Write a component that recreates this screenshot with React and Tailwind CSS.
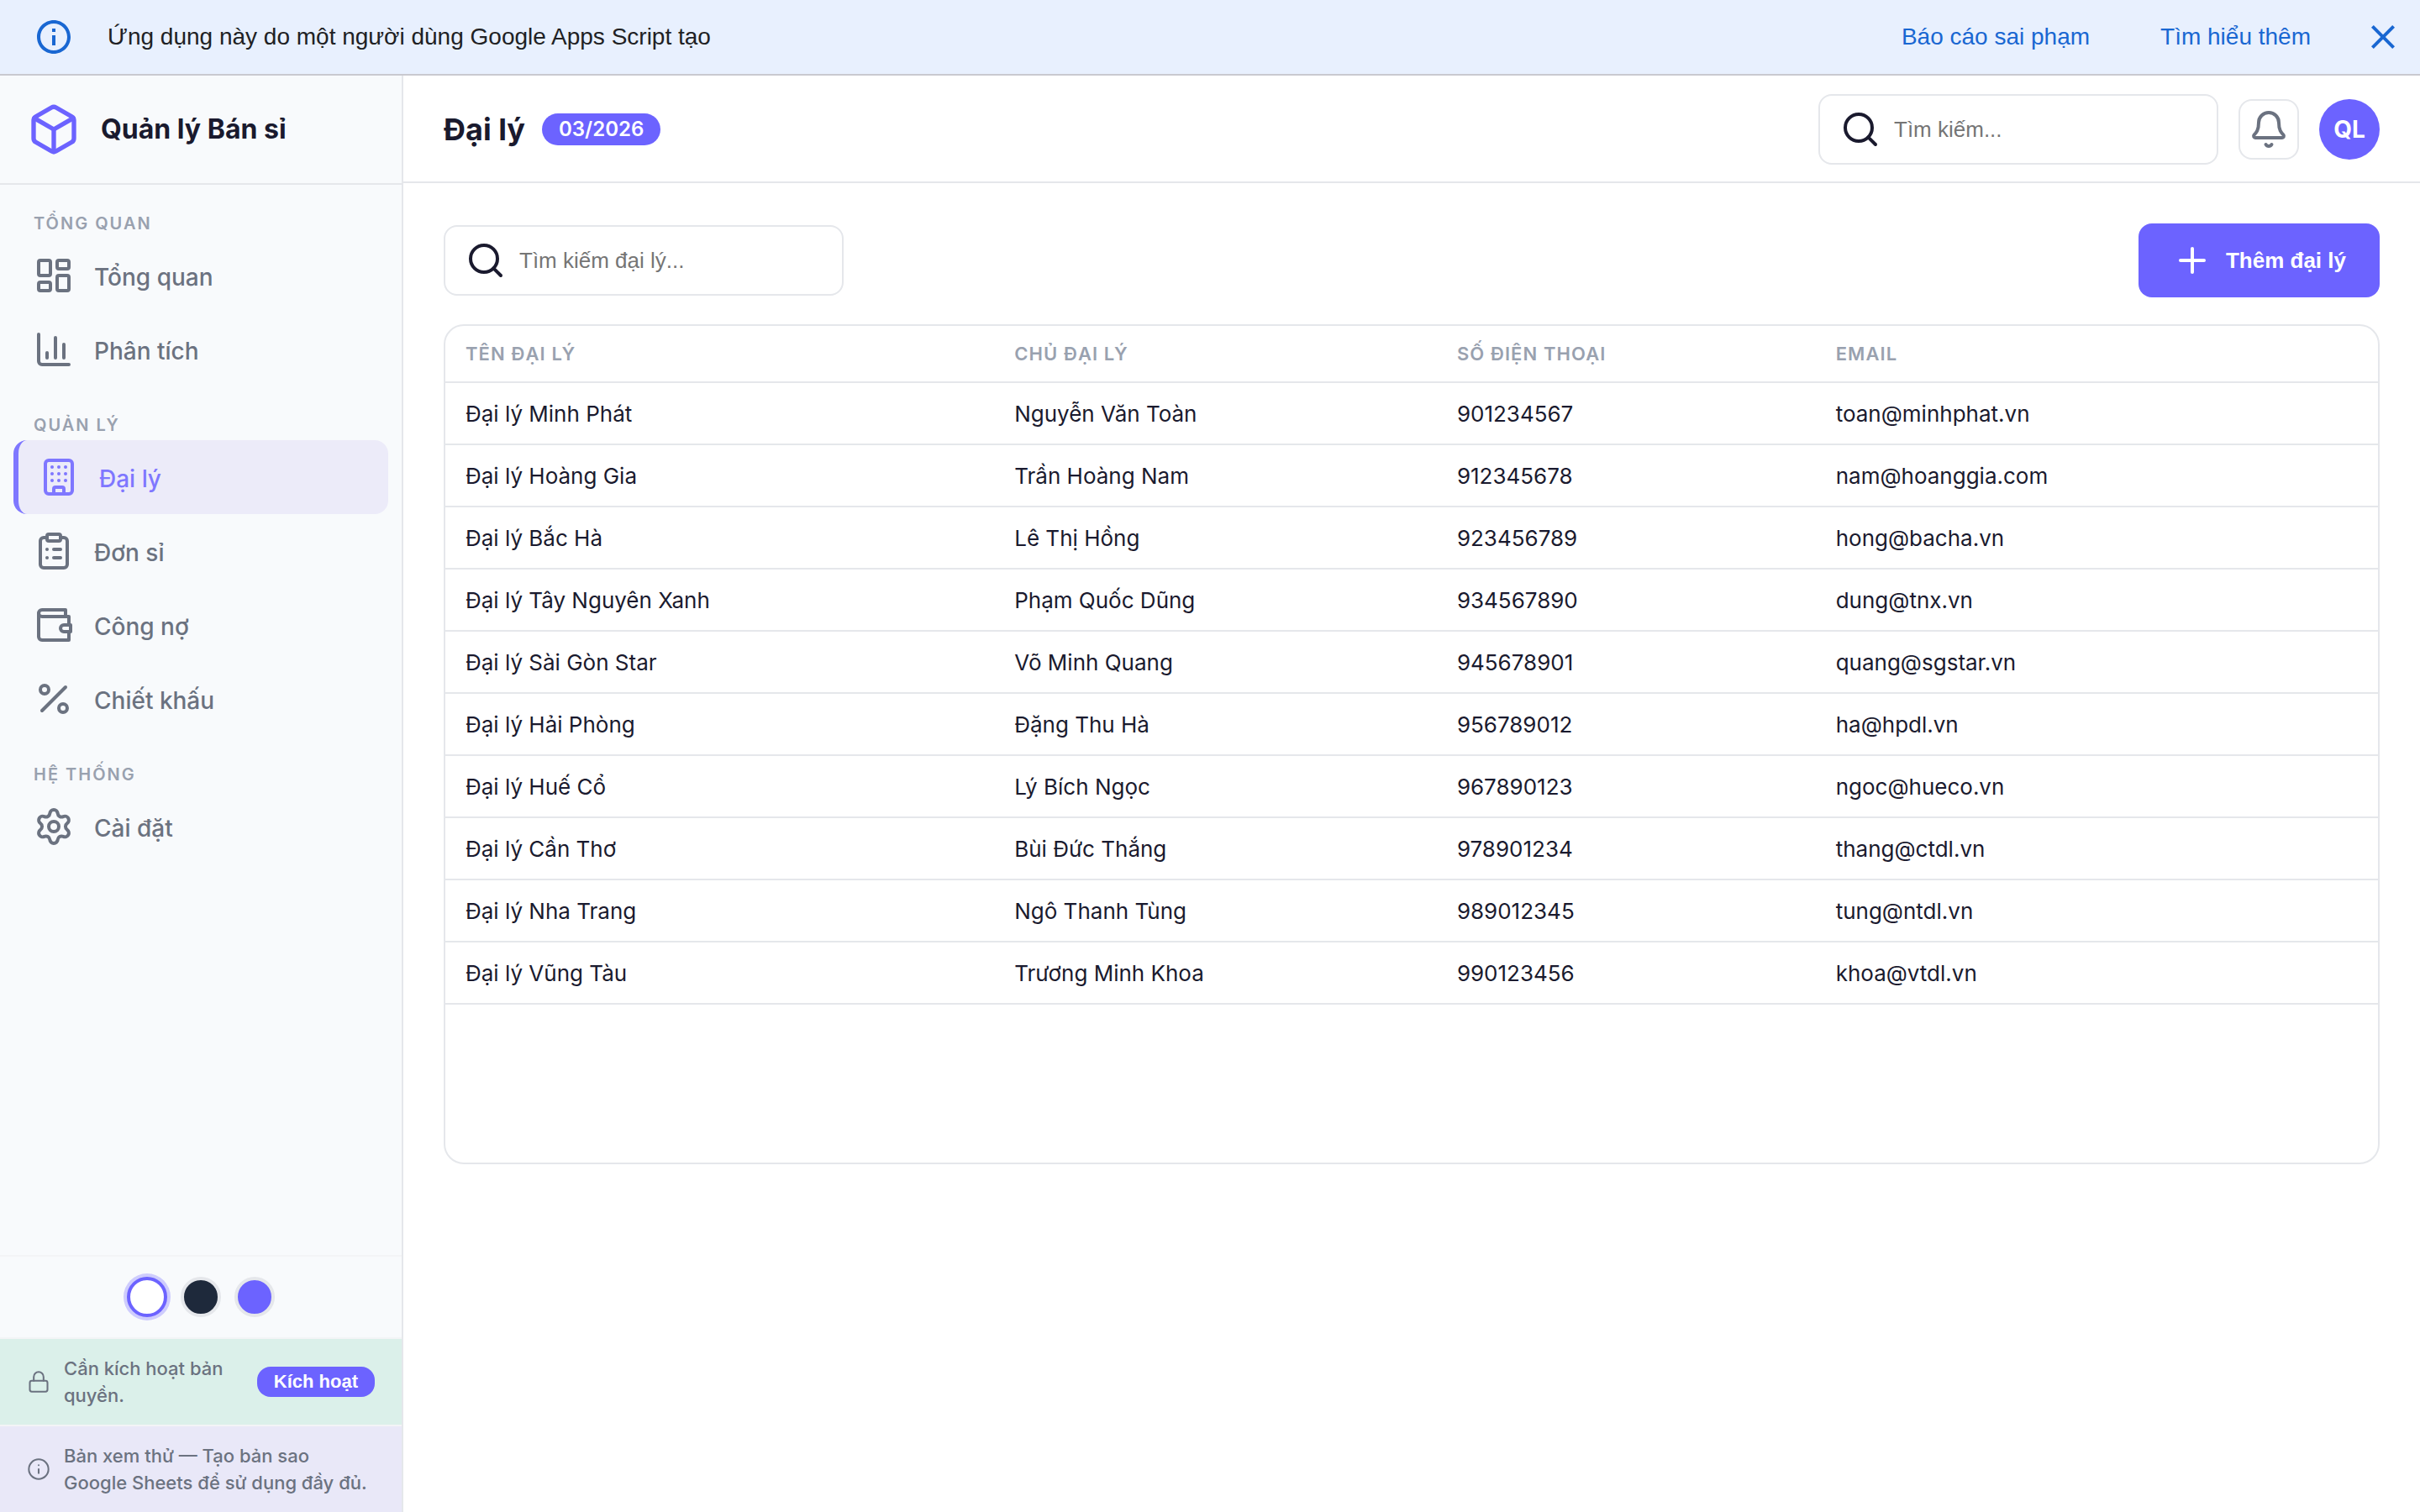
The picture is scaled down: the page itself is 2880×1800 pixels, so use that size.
import React, { useState } from "react";
import {
  Bell,
  Box,
  Building,
  ChartColumn,
  ClipboardList,
  Info,
  LayoutDashboard,
  Lock,
  Percent,
  Plus,
  Search,
  Settings,
} from "lucide-react";

const WalletIcon = ({ className = "size-12" }) => (
  <svg
    viewBox="0 0 24 24"
    className={className}
    fill="none"
    stroke="currentColor"
    strokeWidth="2"
    strokeLinecap="round"
    strokeLinejoin="round"
    aria-hidden
  >
    <path d="M21 12V7H5a2 2 0 0 1 0-4h14v4" />
    <path d="M3 5v14a2 2 0 0 0 2 2h16v-5" />
    <path d="M18 12a2 2 0 0 0 0 4h4v-4Z" />
  </svg>
);

const NoticeIcon = ({ className = "size-12" }) => (
  <svg viewBox="0 0 24 24" className={className} fill="currentColor" aria-hidden>
    <path d="M11 7h2v2h-2zm0 4h2v6h-2zm1-9C6.48 2 2 6.48 2 12s4.48 10 10 10 10-4.48 10-10S17.52 2 12 2zm0 18c-4.41 0-8-3.59-8-8s3.59-8 8-8 8 3.59 8 8-3.59 8-8 8z" />
  </svg>
);

const CloseIcon = ({ className = "size-12" }) => (
  <svg viewBox="0 0 24 24" className={className} fill="currentColor" aria-hidden>
    <path d="M19 6.41L17.59 5 12 10.59 6.41 5 5 6.41 10.59 12 5 17.59 6.41 19 12 13.41 17.59 19 19 17.59 13.41 12z" />
  </svg>
);

const NAV = [
  {
    title: "Tổng quan",
    items: [
      { id: "overview", label: "Tổng quan", icon: LayoutDashboard },
      { id: "analytics", label: "Phân tích", icon: ChartColumn },
    ],
  },
  {
    title: "Quản lý",
    items: [
      { id: "agents", label: "Đại lý", icon: Building },
      { id: "orders", label: "Đơn sỉ", icon: ClipboardList },
      { id: "debts", label: "Công nợ", icon: WalletIcon },
      { id: "discounts", label: "Chiết khấu", icon: Percent },
    ],
  },
  {
    title: "Hệ thống",
    items: [{ id: "settings", label: "Cài đặt", icon: Settings }],
  },
];

const THEMES = [
  { id: "light", label: "Sáng", color: "bg-white" },
  { id: "dark", label: "Tối", color: "bg-[#1e293b]" },
  { id: "purple", label: "Tím", color: "bg-[#6c63ff]" },
];

const AGENTS = [
  { name: "Đại lý Minh Phát", owner: "Nguyễn Văn Toàn", phone: "901234567", email: "toan@minhphat.vn" },
  { name: "Đại lý Hoàng Gia", owner: "Trần Hoàng Nam", phone: "912345678", email: "nam@hoanggia.com" },
  { name: "Đại lý Bắc Hà", owner: "Lê Thị Hồng", phone: "923456789", email: "hong@bacha.vn" },
  { name: "Đại lý Tây Nguyên Xanh", owner: "Phạm Quốc Dũng", phone: "934567890", email: "dung@tnx.vn" },
  { name: "Đại lý Sài Gòn Star", owner: "Võ Minh Quang", phone: "945678901", email: "quang@sgstar.vn" },
  { name: "Đại lý Hải Phòng", owner: "Đặng Thu Hà", phone: "956789012", email: "ha@hpdl.vn" },
  { name: "Đại lý Huế Cổ", owner: "Lý Bích Ngọc", phone: "967890123", email: "ngoc@hueco.vn" },
  { name: "Đại lý Cần Thơ", owner: "Bùi Đức Thắng", phone: "978901234", email: "thang@ctdl.vn" },
  { name: "Đại lý Nha Trang", owner: "Ngô Thanh Tùng", phone: "989012345", email: "tung@ntdl.vn" },
  { name: "Đại lý Vũng Tàu", owner: "Trương Minh Khoa", phone: "990123456", email: "khoa@vtdl.vn" },
];

function NoticeBar() {
  return (
    <div className="flex h-[90px] shrink-0 items-center border-b-2 border-[#c9c9d0] bg-[#e8f0fe] pl-10 pr-5 font-['Liberation_Sans',sans-serif] text-[28px] text-[#202124]">
      <NoticeIcon className="size-12 text-[#1967d2]" />
      <span className="ml-10 flex-1">Ứng dụng này do một người dùng Google Apps Script tạo</span>
      <a href="#report" className="text-[#1967d2]">Báo cáo sai phạm</a>
      <a href="#more" className="ml-[84px] text-[#1967d2]">Tìm hiểu thêm</a>
      <button aria-label="Đóng" className="ml-[62px] text-[#1967d2]">
        <CloseIcon className="size-12" />
      </button>
    </div>
  );
}

function NavItem({ item, active, onSelect }) {
  const Icon = item.icon;
  return (
    <button
      onClick={() => onSelect(item.id)}
      className={
        "flex h-[88px] w-full items-center gap-6 rounded-2xl px-6 text-[28px] font-medium " +
        (active ? "border-l-6 border-[#7f77ff] bg-[#ecebf9] text-[#7f77ff]" : "text-[#6b7280]")
      }
    >
      <Icon className="size-12" />
      <span className="pt-1">{item.label}</span>
    </button>
  );
}

function Sidebar() {
  const [page, setPage] = useState("agents");
  const [theme, setTheme] = useState("light");

  return (
    <aside className="flex w-[480px] shrink-0 flex-col border-r-2 border-gray-200 bg-[#f8fafc]">
      <div className="flex h-[130px] items-center gap-6 border-b-2 border-gray-200 px-8">
        <Box className="size-16 text-[#6c63ff]" />
        <span className="text-[32px] font-bold">Quản lý Bán sỉ</span>
      </div>

      <nav className="flex-1 px-4">
        {NAV.map((group) => (
          <div key={group.title}>
            <div className="px-6 pt-[34px] pb-1.5 text-[20px] leading-6 font-semibold tracking-widest text-gray-400 uppercase">
              {group.title}
            </div>
            {group.items.map((item) => (
              <NavItem key={item.id} item={item} active={page === item.id} onSelect={setPage} />
            ))}
          </div>
        ))}
      </nav>

      <div className="flex justify-center gap-4 border-t-2 border-gray-100 py-6">
        {THEMES.map((t) => (
          <button
            key={t.id}
            aria-label={t.label}
            onClick={() => setTheme(t.id)}
            className={
              "size-12 rounded-full border-4 " + t.color + " " +
              (theme === t.id ? "border-[#6c63ff] ring-4 ring-[#6c63ff]/30" : "border-gray-200")
            }
          />
        ))}
      </div>

      <div className="flex items-center gap-4 border-t-2 border-gray-100 bg-[#dbf0ea] px-8 py-[19px] text-[22px] leading-8 font-medium text-[#6b7280]">
        <Lock className="size-7 shrink-0" strokeWidth={1.75} />
        <span className="flex-1">Cần kích hoạt bản quyền.</span>
        <button className="h-9 shrink-0 rounded-2xl bg-[#6c63ff] px-5 font-['Liberation_Sans',sans-serif] font-bold text-white">
          Kích hoạt
        </button>
      </div>
      <div className="flex items-center gap-4 border-t-2 border-gray-100 bg-[#e9e8f8] pl-8 py-[19px] text-[22px] leading-8 font-medium text-[#6b7280]">
        <Info className="size-7 shrink-0" strokeWidth={1.75} />
        <span>
          Bản xem thử — Tạo bản sao
          <br />
          Google Sheets để sử dụng đầy đủ.
        </span>
      </div>
    </aside>
  );
}

function SearchBox({ placeholder }) {
  return (
    <label className="flex h-[84px] w-[476px] items-center gap-4 rounded-2xl border-2 border-gray-200 bg-white px-6">
      <Search className="size-12 shrink-0" />
      <input
        type="text"
        aria-label={placeholder}
        placeholder={placeholder}
        className="w-full min-w-0 font-['Liberation_Sans',sans-serif] text-[26px] outline-none placeholder:text-[#757575]"
      />
    </label>
  );
}

function Header() {
  return (
    <header className="flex h-32 items-center gap-6 border-b-2 border-gray-200 px-12 pt-0.5">
      <div className="flex items-center gap-5">
        <h1 className="text-[36px] font-bold">Đại lý</h1>
        <span className="rounded-[20px] bg-[#6c63ff] px-5 text-[24px] leading-[38px] font-semibold text-white">
          03/2026
        </span>
      </div>
      <div className="ml-auto flex items-center gap-6">
        <SearchBox placeholder="Tìm kiếm..." />
        <button
          aria-label="Thông báo"
          className="flex size-18 items-center justify-center rounded-2xl border-2 border-gray-200 text-[#6b7280]"
        >
          <Bell className="size-12" />
        </button>
        <div className="flex size-18 items-center justify-center rounded-full bg-[#6c63ff] text-[28px] font-bold text-white">
          QL
        </div>
      </div>
    </header>
  );
}

function AgentTable() {
  return (
    <div className="min-h-[1000px] overflow-hidden rounded-3xl border-2 border-gray-200">
      <table className="w-full table-fixed text-left">
        <thead>
          <tr className="h-[67px] border-b-2 border-gray-200 text-[22px] tracking-wider text-gray-400 uppercase">
            <th className="w-[28.4%] px-6 font-semibold">Tên đại lý</th>
            <th className="w-[22.9%] px-6 font-semibold">Chủ đại lý</th>
            <th className="w-[19.6%] px-6 font-semibold">Số điện thoại</th>
            <th className="px-6 font-semibold">Email</th>
          </tr>
        </thead>
        <tbody>
          {AGENTS.map((a) => (
            <tr key={a.phone} className="h-[74px] border-b-2 border-gray-200 text-[26px]">
              <td className="px-6">{a.name}</td>
              <td className="px-6">{a.owner}</td>
              <td className="px-6">{a.phone}</td>
              <td className="px-6">{a.email}</td>
            </tr>
          ))}
        </tbody>
      </table>
    </div>
  );
}

export default function App() {
  return (
    <div className="flex h-screen flex-col bg-white font-['Inter',sans-serif] text-[#1a1a2e]">
      <NoticeBar />
      <div className="flex min-h-0 flex-1">
        <Sidebar />
        <div className="min-w-0 flex-1">
          <Header />
          <main className="space-y-8 p-12">
            <div className="flex items-center justify-between">
              <SearchBox placeholder="Tìm kiếm đại lý..." />
              <button className="flex h-[88px] items-center gap-4 rounded-2xl bg-[#6c63ff] px-10 font-['Liberation_Sans',sans-serif] text-[26px] font-bold text-white">
                <Plus className="size-12" />
                Thêm đại lý
              </button>
            </div>
            <AgentTable />
          </main>
        </div>
      </div>
    </div>
  );
}
